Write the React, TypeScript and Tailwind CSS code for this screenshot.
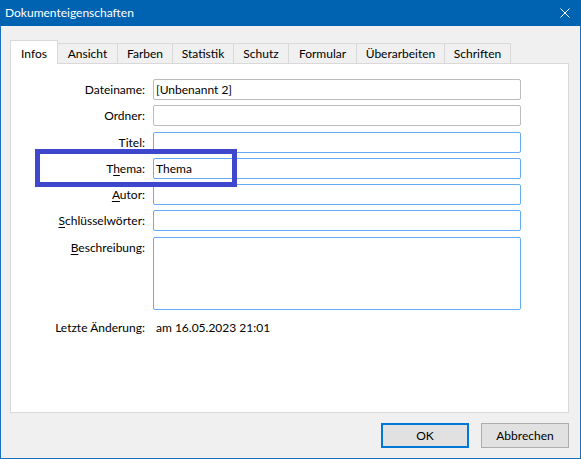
import React from "react";

const tabs = [
  { label: "Infos", w: "w-[48px]" },
  { label: "Ansicht", w: "w-[61px]" },
  { label: "Farben", w: "w-[56px]" },
  { label: "Statistik", w: "w-[62px]" },
  { label: "Schutz", w: "w-[56px]" },
  { label: "Formular", w: "w-[69px]" },
  { label: "Überarbeiten", w: "w-[89px]" },
  { label: "Schriften", w: "w-[67px]" },
];

function Label({ pre, u, post }: { pre: string; u?: string; post?: string }) {
  return (
    <div className="w-[134px] h-[21px] flex items-center justify-end shrink-0">
      <span>
        {pre}
        {u ? <span className="underline decoration-1 underline-offset-2">{u}</span> : null}
        {post}
      </span>
    </div>
  );
}

function Field({
  mt,
  label,
  value,
  gray,
  tall,
}: {
  mt: string;
  label: React.ReactNode;
  value?: string;
  gray?: boolean;
  tall?: boolean;
}) {
  return (
    <div className={`flex items-start gap-[8px] ${mt}`}>
      {label}
      <div
        className={`w-[368px] ${tall ? "h-[73px]" : "h-[21px]"} bg-white border rounded-[2px] ${
          gray ? "border-[#bcbcbc]" : "border-[#66acf3]"
        } flex ${tall ? "items-start" : "items-center"} pl-[2px]`}
      >
        {value ? <span>{value}</span> : null}
      </div>
    </div>
  );
}

export default function App() {
  return (
    <div className="relative w-[581px] h-[459px] flex flex-col font-['Lato','Noto_Sans',sans-serif] text-[12px] text-black">
      <div className="h-[26px] bg-[#0063b1] flex items-center justify-between pl-[5px] pr-[11px] text-white shrink-0">
        <span>Dokumenteigenschaften</span>
        <svg width="10" height="10" viewBox="0 0 10 10">
          <path d="M0.5 0.5 L9.5 9.5 M9.5 0.5 L0.5 9.5" stroke="white" strokeWidth="1" fill="none" />
        </svg>
      </div>
      <div className="flex-1 bg-[#f0f0f0] border-x border-b border-[#1a6fc1] flex flex-col">
        <div className="mt-[14px] ml-[9px] h-[24px] flex items-end">
          {tabs.map((t, i) =>
            i === 0 ? (
              <div
                key={t.label}
                className={`${t.w} h-[24px] relative z-10 bg-white border-t border-x border-[#d9d9d9] flex items-start justify-center pt-[4px]`}
              >
                {t.label}
              </div>
            ) : (
              <div
                key={t.label}
                className={`${t.w} h-[21px] -ml-px bg-[#f0f0f0] border-t border-x border-[#d9d9d9] flex items-center justify-center pb-[1px]`}
              >
                {t.label}
              </div>
            )
          )}
        </div>
        <div className="-mt-px ml-[9px] w-[559px] h-[350px] bg-white border border-[#d9d9d9] flex flex-col">
          <Field mt="mt-[15px]" label={<Label pre="Dateiname:" />} value="[Unbenannt 2]" gray />
          <Field mt="mt-[5px]" label={<Label pre="Ordner:" />} gray />
          <Field mt="mt-[6px]" label={<Label pre="" u="T" post="itel:" />} />
          <Field mt="mt-[5px]" label={<Label pre="T" u="h" post="ema:" />} value="Thema" />
          <Field mt="mt-[5px]" label={<Label pre="" u="A" post="utor:" />} />
          <Field mt="mt-[5px]" label={<Label pre="" u="S" post="chlüsselwörter:" />} />
          <Field mt="mt-[6px]" label={<Label pre="" u="B" post="eschreibung:" />} tall />
          <div className="flex items-center gap-[8px] mt-[7px] h-[21px]">
            <Label pre="Letzte Änderung:" />
            <span className="pl-[3px]">am 16.05.2023 21:01</span>
          </div>
        </div>
        <div className="mt-[10px] ml-[9px] w-[559px] flex justify-end gap-[12px]">
          <div className="w-[88px] h-[25px] bg-[#e1e1e1] border-2 border-[#0078d7] flex items-center justify-center">
            OK
          </div>
          <div className="w-[88px] h-[25px] bg-[#e1e1e1] border border-[#adadad] flex items-center justify-center">
            Abbrechen
          </div>
        </div>
      </div>
      <div className="absolute left-[35px] top-[149px] w-[202px] h-[38px] border-[5px] border-[#3f48cc]" />
    </div>
  );
}
